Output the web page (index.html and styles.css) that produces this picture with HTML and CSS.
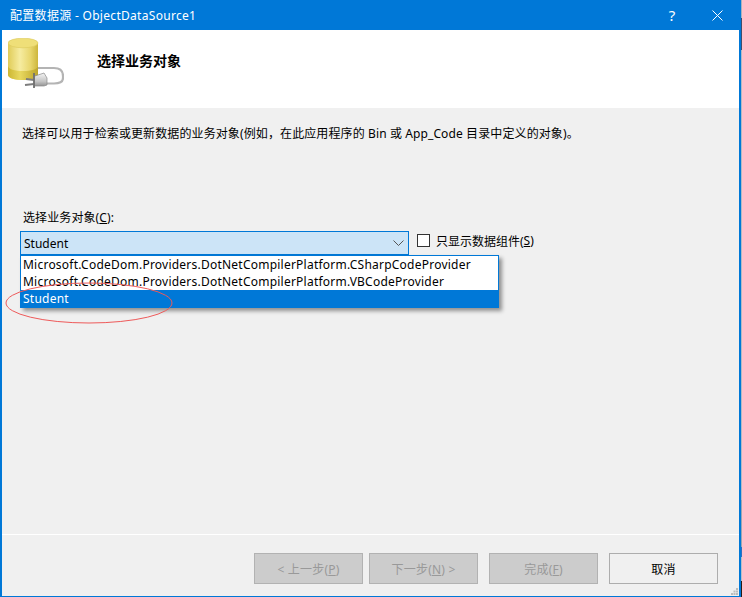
FILE: index.html
```html
<!DOCTYPE html>
<html lang="zh">
<head>
<meta charset="utf-8">
<title>配置数据源</title>
<link rel="stylesheet" href="styles.css">
</head>
<body>
<div class="window">
  <div class="titlebar">
    <span class="title">配置数据源 - ObjectDataSource1</span>
    <span class="help">?</span>
    <svg class="close" width="11" height="11" viewBox="0 0 11 11"><path d="M.5.5l10 10M10.5.5l-10 10" stroke="#fff" fill="none"/></svg>
  </div>
  <div class="header">
    <svg class="logo" width="56" height="52" viewBox="0 0 56 52">
      <defs>
        <linearGradient id="cyl" x1="0" x2="1" y1="0" y2="0">
          <stop offset="0" stop-color="#e0cc58"/><stop offset=".4" stop-color="#f6ecA0"/><stop offset=".75" stop-color="#e8d66c"/><stop offset="1" stop-color="#cdb63c"/>
        </linearGradient>
        <linearGradient id="liq" x1="0" x2="1" y1="0" y2="0">
          <stop offset="0" stop-color="#cdb733"/><stop offset=".4" stop-color="#e8d860"/><stop offset="1" stop-color="#bda52a"/>
        </linearGradient>
        <linearGradient id="plug" x1="0" x2="0" y1="0" y2="1">
          <stop offset="0" stop-color="#f4f4f4"/><stop offset=".6" stop-color="#c4c4c4"/><stop offset="1" stop-color="#8a8a8a"/>
        </linearGradient>
      </defs>
      <path d="M0 5v32c0 3 7 5 15 5s15-2 15-5V5z" fill="url(#cyl)"/>
      <path d="M0 28c0 3 7 5 15 5s15-2 15-5v9c0 3-7 5-15 5S0 40 0 37z" fill="url(#liq)"/>
      <ellipse cx="15" cy="5" rx="15" ry="4.800" fill="#efdf78" stroke="#dcc95a" stroke-width=".6"/>
      <path d="M30 30H46C52 30 55 33 55 38V40C55 44 52 45.500 46 45.500H39" fill="none" stroke="#b4b4b4" stroke-width="2.200"/>
      <path d="M18 41l8 1M17 47l9-1" stroke="#7d7d7d" stroke-width="2"/>
      <path d="M26 37l1 1 9-3 3 5v7l-3 1-9 0-1 1z" fill="url(#plug)" stroke="#8a8a8a" stroke-width=".7"/>
      <path d="M26 35v15" stroke="#707070" stroke-width="1.800"/>
    </svg>
    <div class="heading">选择业务对象</div>
  </div>
  <div class="body">
    <p class="intro">选择可以用于检索或更新数据的业务对象(例如，在此应用程序的 Bin 或 App_Code 目录中定义的对象)。</p>
    <div class="field-label">选择业务对象(<u>C</u>):</div>
    <div class="field-row">
      <div class="combo">
        <span>Student</span>
        <svg width="11" height="6" viewBox="0 0 11 6"><path d="M.5.5l5 5 5-5" stroke="#555" fill="none"/></svg>
      </div>
      <label class="check"><span class="box"></span>只显示数据组件(<u>S</u>)</label>
    </div>
    <ul class="list">
      <li>Microsoft.CodeDom.Providers.DotNetCompilerPlatform.CSharpCodeProvider</li>
      <li>Microsoft.CodeDom.Providers.DotNetCompilerPlatform.VBCodeProvider</li>
      <li class="selected">Student</li>
    </ul>
    <svg class="mark" width="168" height="42" viewBox="0 0 168 42"><ellipse cx="84" cy="21" rx="83" ry="20" fill="none" stroke="#ee5a5a"/></svg>
    <div class="footer">
      <button class="btn" disabled>&lt; 上一步(<u>P</u>)</button>
      <button class="btn" disabled>下一步(<u>N</u>) &gt;</button>
      <button class="btn finish" disabled>完成(<u>F</u>)</button>
      <button class="btn cancel">取消</button>
    </div>
    <svg class="grip" width="7" height="7" viewBox="0 0 7 7"><path d="M5 0h2v2H5zM2.500 2.500h2v2h-2zM5 2.500h2v2H5zM0 5h2v2H0zM2.500 5h2v2h-2zM5 5h2v2H5z" fill="#bdbdbd"/></svg>
  </div>
</div>
</body>
</html>
```
FILE: styles.css
```css
* { box-sizing: border-box; }
html, body { margin: 0; padding: 0; overflow: hidden; }
body { width: 742px; height: 597px; font-family: "Noto Sans", "Noto Sans CJK SC", sans-serif; font-size: 12px; color: #000; background: linear-gradient(#a9b1bd 0 18px, #3f4d6c 18px 50px, #b3bac5 50px 500px, #9ea6b2 500px 547px, #2f6fc0 547px 557px, #b8bec8 557px 581px, #2b1a14 581px 597px); }
.window { width: 741px; height: 597px; display: flex; flex-direction: column; border: solid #0078d7; border-width: 0 2px 1px 2px; background: #f0f0f0; }
.titlebar { height: 30px; flex: none; background: #0078d7; color: #fff; display: flex; align-items: center; padding-left: 8px; }
.title { flex: 1; letter-spacing: .3px; }
.help { width: 16px; margin-right: 32px; font-size: 15px; text-align: center; }
.close { margin-right: 16px; }
.header { height: 78px; flex: none; background: #fff; display: flex; align-items: flex-start; }
.logo { margin: 8px 0 0 6px; flex: none; }
.heading { margin: 22px 0 0 33px; font-weight: 700; font-size: 14px; line-height: 18px; }
.body { position: relative; flex: 1; padding: 17px 0 0 18px; display: flex; flex-direction: column; }
.intro { margin: 0 0 0 2px; line-height: 18px; letter-spacing: .11px; }
.field-label { margin: 66px 0 0 3px; line-height: 18px; letter-spacing: .1px; }
.field-row { margin-top: 4px; display: flex; align-items: flex-start; }
.combo { width: 389px; height: 24px; border: 1px solid #0078d7; background: #cce4f7; display: flex; align-items: center; justify-content: space-between; padding: 0 4px 0 3px; }
.check { margin: 3px 0 0 8px; display: flex; align-items: center; height: 13px; }
.box { width: 13px; height: 13px; border: 1px solid #333; background: #fff; margin-right: 6px; }
.list { position: absolute; left: 18px; top: 147px; width: 479px; margin: 0; padding: 0; list-style: none; border: 1px solid #0078d7; background: #fff; box-shadow: 3px 3px 4px rgba(0,0,0,.4); }
.list li { height: 17px; line-height: 17px; padding-left: 2px; white-space: nowrap; letter-spacing: .23px; }
.list .selected { background: #0078d7; color: #fff; }
.mark { position: absolute; left: 3px; top: 174px; }
.footer { margin: auto 0 0 -18px; height: 62px; border-top: 1px solid #fff; padding: 18px 21px 0 0; display: flex; justify-content: flex-end; gap: 6px; }
.btn { width: 109px; height: 31px; padding: 0; border: 1px solid #b2b2b2; background: #ccc; color: #999; font: inherit; letter-spacing: .2px; }
.finish { margin-left: 5px; }
.cancel { margin-left: 5px; background: #f0f0f0; border-color: #adadad; color: #000; }
.grip { position: absolute; right: 1px; bottom: 1px; }
```
